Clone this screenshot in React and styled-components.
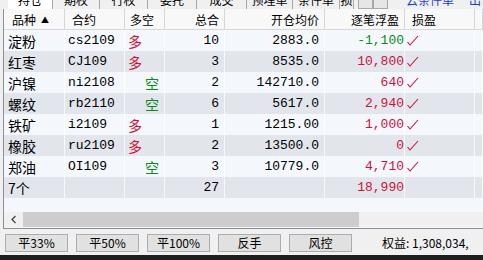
import styled, { createGlobalStyle } from "styled-components";

const GlobalStyle = createGlobalStyle`
  html, body {
    margin: 0;
    padding: 0;
    background: #f0f0f0;
    overflow: hidden;
  }
  body {
    font-family: "Noto Sans CJK SC", "Liberation Sans", sans-serif;
    font-size: 12px;
    color: #000;
  }
`;

const RED = "#d0103a";
const GREEN = "#0c8a1c";
const CJK = `"Noto Sans CJK SC", sans-serif`;
const MONO = `"Liberation Mono", "Noto Sans CJK SC", monospace`;

const Page = styled.div`
  width: 483px;
  height: 260px;
  display: flex;
  flex-direction: column;
  overflow: hidden;
`;

const TabStrip = styled.div`
  height: 9px;
  overflow: hidden;
  display: flex;
  align-items: flex-end;
  padding-left: 8px;
`;

const Tab = styled.div`
  height: 18px;
  width: ${(p) => p.$w}px;
  flex: none;
  box-sizing: border-box;
  display: flex;
  align-items: center;
  justify-content: center;
  font-size: 12px;
  line-height: 1;
  background: ${(p) => (p.$active ? "#ffffff" : "#f0f0f0")};
  border-right: 1px solid #a9a9a9;
  color: ${(p) => (p.$blue ? "#1b3fcf" : "#000")};
  ${(p) => p.$blue && "border-right: none;"}
`;

const TabArrows = styled.div`
  display: flex;
  height: 18px;
  margin-left: 4px;
  margin-right: 12px;
`;

const TabArrow = styled.div`
  width: 15px;
  height: 18px;
  box-sizing: border-box;
  border: 1px solid #a9a9a9;
  background: #e6e6e6;
`;

const Frame = styled.div`
  margin-left: 3px;
  height: 219px;
  border-left: 1px solid #8a8f99;
  border-bottom: 1px solid #8a8f99;
  background: #f4f8fd;
  display: flex;
  flex-direction: column;
`;

const Row = styled.div`
  display: grid;
  grid-template-columns: 61px 60px 40px 60px 100px 80px 70px 1fr;
  height: ${(p) => (p.$head ? 21 : 21)}px;
  background: ${(p) => (p.$head ? "#f8f8f8" : p.$alt ? "#e2e6ec" : "#f4f8fd")};
`;

const HeadCell = styled.div`
  display: flex;
  align-items: center;
  justify-content: ${(p) => (p.$right ? "flex-end" : "flex-start")};
  padding: 0 ${(p) => (p.$right ? 5 : 0)}px 0 ${(p) => (p.$pl ?? 7)}px;
  border-right: 1px solid #d6d6d6;
  border-bottom: 1px solid #d6d6d6;
  font-family: ${CJK};
  font-size: 12px;
  white-space: nowrap;
`;

const SortMark = styled.span`
  font-size: 8px;
  margin-left: 5px;
`;

const Cell = styled.div`
  display: flex;
  align-items: center;
  justify-content: ${(p) => (p.$right ? "flex-end" : "flex-start")};
  padding: 0 ${(p) => p.$pr ?? 0}px 0 ${(p) => p.$pl ?? 0}px;
  border-right: 1px solid rgba(255, 255, 255, 0.7);
  font-family: ${(p) => (p.$cjk ? CJK : MONO)};
  font-size: ${(p) => (p.$cjk ? 14 : 13)}px;
  color: ${(p) => p.$color || "#000"};
  white-space: nowrap;
  overflow: visible;
`;

const Side = styled.span`
  font-family: ${CJK};
  font-size: 14px;
  color: ${(p) => (p.$long ? RED : GREEN)};
  margin-left: ${(p) => (p.$long ? 3 : 20)}px;
`;

const Filler = styled.div`
  height: 14px;
  background: #f4f8fd;
`;

const HScroll = styled.div`
  height: 15px;
  display: flex;
  background: #f0f0f0;
`;

const ScrollArrow = styled.div`
  width: 19px;
  display: flex;
  align-items: center;
  justify-content: center;
`;

const ScrollThumb = styled.div`
  width: 336px;
  background: #cdcdcd;
`;

const Toolbar = styled.div`
  height: 26px;
  display: flex;
  align-items: center;
  gap: 8px;
  padding: 1px 0 0 5px;
  box-sizing: border-box;
  background: #f0f0f0;
`;

const ToolButton = styled.div`
  width: 63px;
  height: 18px;
  box-sizing: border-box;
  border: 1px solid #adadad;
  background: #e1e1e1;
  display: flex;
  align-items: center;
  justify-content: center;
  font-family: "Noto Sans CJK SC", "Liberation Sans", sans-serif;
  font-size: 12px;
  flex: none;
`;

const Equity = styled.div`
  margin-left: 22px;
  font-size: 12px;
  white-space: nowrap;
  font-family: "Noto Sans CJK SC", "Liberation Sans", sans-serif;
`;

const StatusBar = styled.div`
  flex: 1;
  background: #1e1e1e;
`;

const Check = () => (
  <svg width="14" height="13" viewBox="0 0 14 13">
    <path d="M1.5 8 L4 11 L12 2" fill="none" stroke={RED} strokeWidth="1.1" />
  </svg>
);

const positions = [
  { name: "淀粉", code: "cs2109", long: true, qty: 10, price: "2883.0", pnl: "-1,100" },
  { name: "红枣", code: "CJ109", long: true, qty: 3, price: "8535.0", pnl: "10,800" },
  { name: "沪镍", code: "ni2108", long: false, qty: 2, price: "142710.0", pnl: "640" },
  { name: "螺纹", code: "rb2110", long: false, qty: 6, price: "5617.0", pnl: "2,940" },
  { name: "铁矿", code: "i2109", long: true, qty: 1, price: "1215.00", pnl: "1,000" },
  { name: "橡胶", code: "ru2109", long: true, qty: 2, price: "13500.0", pnl: "0" },
  { name: "郑油", code: "OI109", long: false, qty: 3, price: "10779.0", pnl: "4,710" },
];

const tabs = [
  { label: "持仓", w: 45, active: true },
  { label: "期权", w: 47 },
  { label: "行权", w: 48 },
  { label: "委托", w: 49 },
  { label: "成交", w: 50 },
  { label: "预埋单", w: 46 },
  { label: "条件单", w: 47 },
  { label: "损", w: 14 },
];

export default function App() {
  return (
    <Page>
      <GlobalStyle />
      <TabStrip>
        {tabs.map((t) => (
          <Tab key={t.label} $w={t.w} $active={t.active}>
            {t.label}
          </Tab>
        ))}
        <TabArrows>
          <TabArrow />
          <TabArrow />
        </TabArrows>
        <Tab $w={60} $blue>云条件单</Tab>
        <Tab $w={30} $blue>出</Tab>
      </TabStrip>
      <Frame>
        <Row $head>
          <HeadCell $pl={8}>
            品种<SortMark>▲</SortMark>
          </HeadCell>
          <HeadCell>合约</HeadCell>
          <HeadCell $pl={5}>多空</HeadCell>
          <HeadCell $right>总合</HeadCell>
          <HeadCell $right>开仓均价</HeadCell>
          <HeadCell $right>逐笔浮盈</HeadCell>
          <HeadCell>损盈</HeadCell>
          <HeadCell />
        </Row>
        {positions.map((p, i) => (
          <Row key={p.code} $alt={i % 2 === 1}>
            <Cell $cjk $pl={4}>{p.name}</Cell>
            <Cell $pl={3}>{p.code}</Cell>
            <Cell>
              <Side $long={p.long}>{p.long ? "多" : "空"}</Side>
            </Cell>
            <Cell $right $pr={5}>{p.qty}</Cell>
            <Cell $right $pr={5}>{p.price}</Cell>
            <Cell $right $color={p.pnl.startsWith("-") ? GREEN : RED}>
              {p.pnl}
            </Cell>
            <Cell $pl={1}>
              <Check />
            </Cell>
            <Cell />
          </Row>
        ))}
        <Row $alt>
          <Cell $cjk $pl={4}>7个</Cell>
          <Cell />
          <Cell />
          <Cell $right $pr={5}>27</Cell>
          <Cell />
          <Cell $right $color={RED}>18,990</Cell>
          <Cell />
          <Cell />
        </Row>
        <Filler />
        <HScroll>
          <ScrollArrow>
            <svg width="8" height="9" viewBox="0 0 8 9">
              <path d="M5.5 1 L2 4.5 L5.5 8" fill="none" stroke="#444" strokeWidth="1.3" />
            </svg>
          </ScrollArrow>
          <ScrollThumb />
        </HScroll>
      </Frame>
      <Toolbar>
        <ToolButton>平33%</ToolButton>
        <ToolButton>平50%</ToolButton>
        <ToolButton>平100%</ToolButton>
        <ToolButton>反手</ToolButton>
        <ToolButton>风控</ToolButton>
        <Equity>权益: 1,308,034,</Equity>
      </Toolbar>
      <StatusBar />
    </Page>
  );
}
